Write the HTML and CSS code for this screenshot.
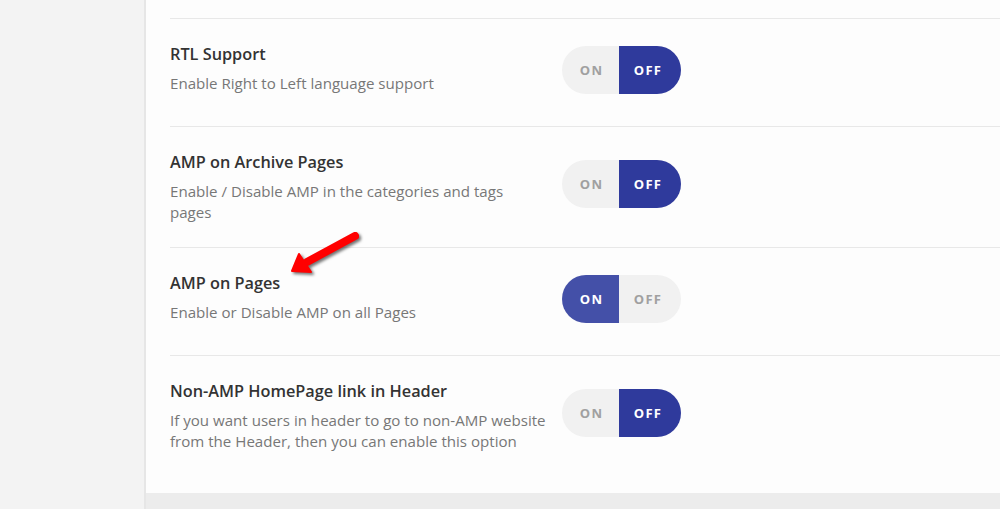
FILE: index.html
```html
<!DOCTYPE html>
<html>
<head>
<meta charset="utf-8">
<link rel="stylesheet" href="styles.css">
</head>
<body>
<div class="page">
  <aside class="sidebar"></aside>
  <main class="main">
    <section class="panel">
      <div class="prev-tail"></div>
      <div class="row">
        <div class="text">
          <div class="title">RTL Support</div>
          <div class="desc">Enable Right to Left language support</div>
        </div>
        <div class="toggle">
          <span class="opt">ON</span><span class="opt active">OFF</span>
        </div>
      </div>
      <div class="row">
        <div class="text">
          <div class="title">AMP on Archive Pages</div>
          <div class="desc">Enable / Disable AMP in the categories and tags pages</div>
        </div>
        <div class="toggle">
          <span class="opt">ON</span><span class="opt active">OFF</span>
        </div>
      </div>
      <div class="row">
        <div class="text">
          <div class="title">AMP on Pages</div>
          <div class="desc">Enable or Disable AMP on all Pages</div>
        </div>
        <div class="toggle">
          <span class="opt active light">ON</span><span class="opt">OFF</span>
        </div>
        <svg class="arrow" width="80" height="50" viewBox="0 0 80 50">
          <line x1="70" y1="8" x2="22" y2="34" stroke="#f00" stroke-width="8" stroke-linecap="round"/>
          <polygon points="7,43 14,26 26,44" fill="#f00" stroke="#f00" stroke-width="2" stroke-linejoin="round"/>
        </svg>
      </div>
      <div class="row last">
        <div class="text">
          <div class="title">Non-AMP HomePage link in Header</div>
          <div class="desc">If you want users in header to go to non-AMP website from the Header, then you can enable this option</div>
        </div>
        <div class="toggle">
          <span class="opt">ON</span><span class="opt active">OFF</span>
        </div>
      </div>
    </section>
    <div class="footer-strip"></div>
  </main>
</div>
</body>
</html>
```

FILE: styles.css
```css
html, body {
  margin: 0;
  padding: 0;
  height: 100%;
  overflow: hidden;
}
body {
  font-family: "Open Sans", "Noto Sans", sans-serif;
  background: #f3f3f3;
}
.page {
  display: flex;
  height: 509px;
}
.sidebar {
  width: 144px;
  flex: none;
  background: #f3f3f3;
  border-right: 2px solid #e6e6e6;
}
.main {
  flex: 1;
  display: flex;
  flex-direction: column;
  background: #ececec;
}
.panel {
  background: #fdfdfd;
  padding: 0 0 17px 24px;
}
.prev-tail {
  height: 18px;
  border-bottom: 1px solid #e8e8e8;
}
.row {
  position: relative;
  display: flex;
  align-items: flex-start;
  padding: 24px 0;
  min-height: 59px;
  border-bottom: 1px solid #e8e8e8;
}
.row.last {
  border-bottom: none;
}
.text {
  width: 377px;
  flex: none;
}
.title {
  font-size: 16.3px;
  font-weight: 600;
  color: #333;
  line-height: 22px;
  margin-bottom: 8px;
}
.desc {
  font-size: 15.1px;
  color: #777;
  line-height: 21px;
}
.toggle {
  align-self: center;
  margin: 0 0 6px 15px;
  display: flex;
  height: 48px;
  border-radius: 24px;
  overflow: hidden;
  background: #f1f1f1;
}
.opt {
  display: flex;
  align-items: center;
  justify-content: center;
  font-size: 13px;
  font-weight: 700;
  letter-spacing: 1.3px;
  color: #a0a0a0;
}
.opt:first-child {
  width: 57px;
  padding-left: 2px;
  box-sizing: border-box;
}
.opt:last-child {
  width: 62px;
  padding-right: 4px;
  box-sizing: border-box;
}
.opt.active {
  background: #2f3a9c;
  color: #fff;
}
.opt.active.light {
  background: #4450a8;
}
.arrow {
  position: absolute;
  left: 115px;
  top: -20px;
  filter: drop-shadow(2px 2px 1.5px rgba(0,0,0,0.55));
}
.footer-strip {
  flex: 1;
  background: #ececec;
}
```
